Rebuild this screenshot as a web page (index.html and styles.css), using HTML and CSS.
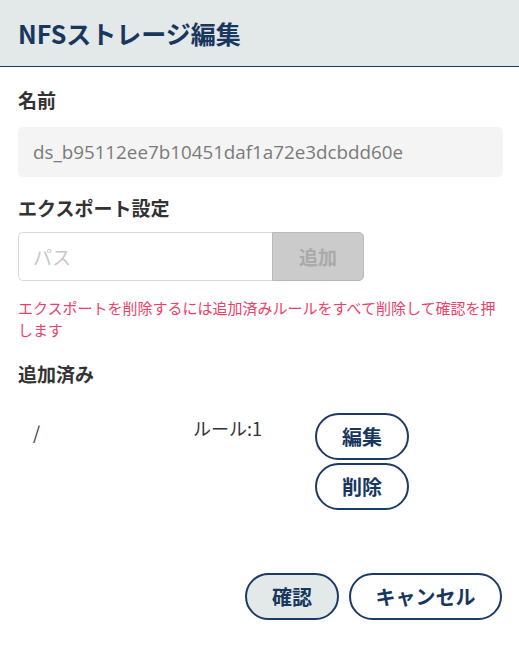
FILE: index.html
```html
<!DOCTYPE html>
<html lang="ja">
<head>
<meta charset="utf-8">
<link rel="stylesheet" href="styles.css">
</head>
<body>
<div class="dialog">
  <header class="dlg-header"><h1 class="dlg-title">NFSストレージ編集</h1></header>
  <main class="dlg-body">
    <div class="label">名前</div>
    <div class="readonly">ds_b95112ee7b10451daf1a72e3dcbdd60e</div>
    <div class="label label-export">エクスポート設定</div>
    <div class="input-group">
      <input class="path-input" type="text" placeholder="パス">
      <button class="add-btn" disabled>追加</button>
    </div>
    <p class="error">エクスポートを削除するには追加済みルールをすべて削除して確認を押します</p>
    <div class="label label-added">追加済み</div>
    <div class="row">
      <div class="path">/</div>
      <div class="rules">ルール:1</div>
      <div class="row-actions">
        <button class="pill">編集</button>
        <button class="pill">削除</button>
      </div>
    </div>
  </main>
  <footer class="dlg-footer">
    <button class="pill pill-primary">確認</button>
    <button class="pill pill-wide">キャンセル</button>
  </footer>
</div>
</body>
</html>
```
FILE: styles.css
```css
* { box-sizing: border-box; }
html, body { margin: 0; padding: 0; background: #fff; }
body {
  font-family: "Noto Sans CJK JP", "Noto Sans", sans-serif;
  color: #333;
  width: 519px;
  height: 645px;
  overflow: hidden;
}
.dialog { display: flex; flex-direction: column; height: 645px; }
.dlg-header {
  background: #e3e8e8;
  height: 67px;
  border-bottom: 1px solid #1b3a66;
  display: flex;
  align-items: center;
  padding: 0 18px;
}
.dlg-title {
  margin: 0;
  font-size: 25px;
  line-height: 30px;
  font-weight: 700;
  color: #17375f;
}
.dlg-body { padding: 88px 16px 0 18px; padding-top: 21px; }
.label {
  font-size: 19px;
  font-weight: 700;
  color: #333;
  line-height: 24px;
}
.readonly {
  margin-top: 15px;
  height: 50px;
  background: #f4f4f4;
  border-radius: 5px;
  padding: 0 15px;
  display: flex;
  align-items: center;
  font-size: 18.8px;
  color: #7a7a7a;
  font-family: "Open Sans", "Noto Sans CJK JP", sans-serif;
}
.label-export { margin-top: 19px; }
.input-group {
  margin-top: 12px;
  display: flex;
  width: 346px;
  height: 49px;
}
.path-input {
  flex: 1;
  min-width: 0;
  border: 1px solid #dadada;
  border-right: none;
  border-radius: 5px 0 0 5px;
  padding: 0 14px;
  font-size: 19px;
  font-family: inherit;
  outline: none;
}
.path-input::placeholder { color: #c8c8c8; }
.add-btn {
  width: 92px;
  background: #cbcbcc;
  border: 1px solid #b9b9b9;
  border-radius: 0 5px 5px 0;
  color: #a9a9a9;
  font-size: 19px;
  font-weight: 700;
  font-family: inherit;
}
.error {
  margin: 16px 0 0;
  font-size: 15px;
  line-height: 22px;
  color: #ec3f69;
}
.label-added { margin-top: 21px; }
.row {
  margin-top: 27px;
  display: flex;
  align-items: flex-start;
}
.path {
  width: 175px;
  padding-left: 15px;
  font-size: 18px;
  line-height: 24px;
  margin-top: 7px;
}
.rules {
  width: 122px;
  font-size: 18px;
  line-height: 24px;
  margin-top: 3px;
}
.row-actions { display: flex; flex-direction: column; gap: 3px; }
.pill {
  height: 47px;
  width: 94px;
  border: 2px solid #1b3a66;
  border-radius: 24px;
  background: #fff;
  color: #17375f;
  font-size: 20px;
  font-weight: 700;
  font-family: inherit;
  padding: 0;
}
.dlg-footer {
  margin-top: auto;
  padding: 0 17px 25px 0;
  display: flex;
  justify-content: flex-end;
  gap: 10px;
}
.pill-primary { background: #e3e8e8; }
.pill-wide { width: 153px; }
```
